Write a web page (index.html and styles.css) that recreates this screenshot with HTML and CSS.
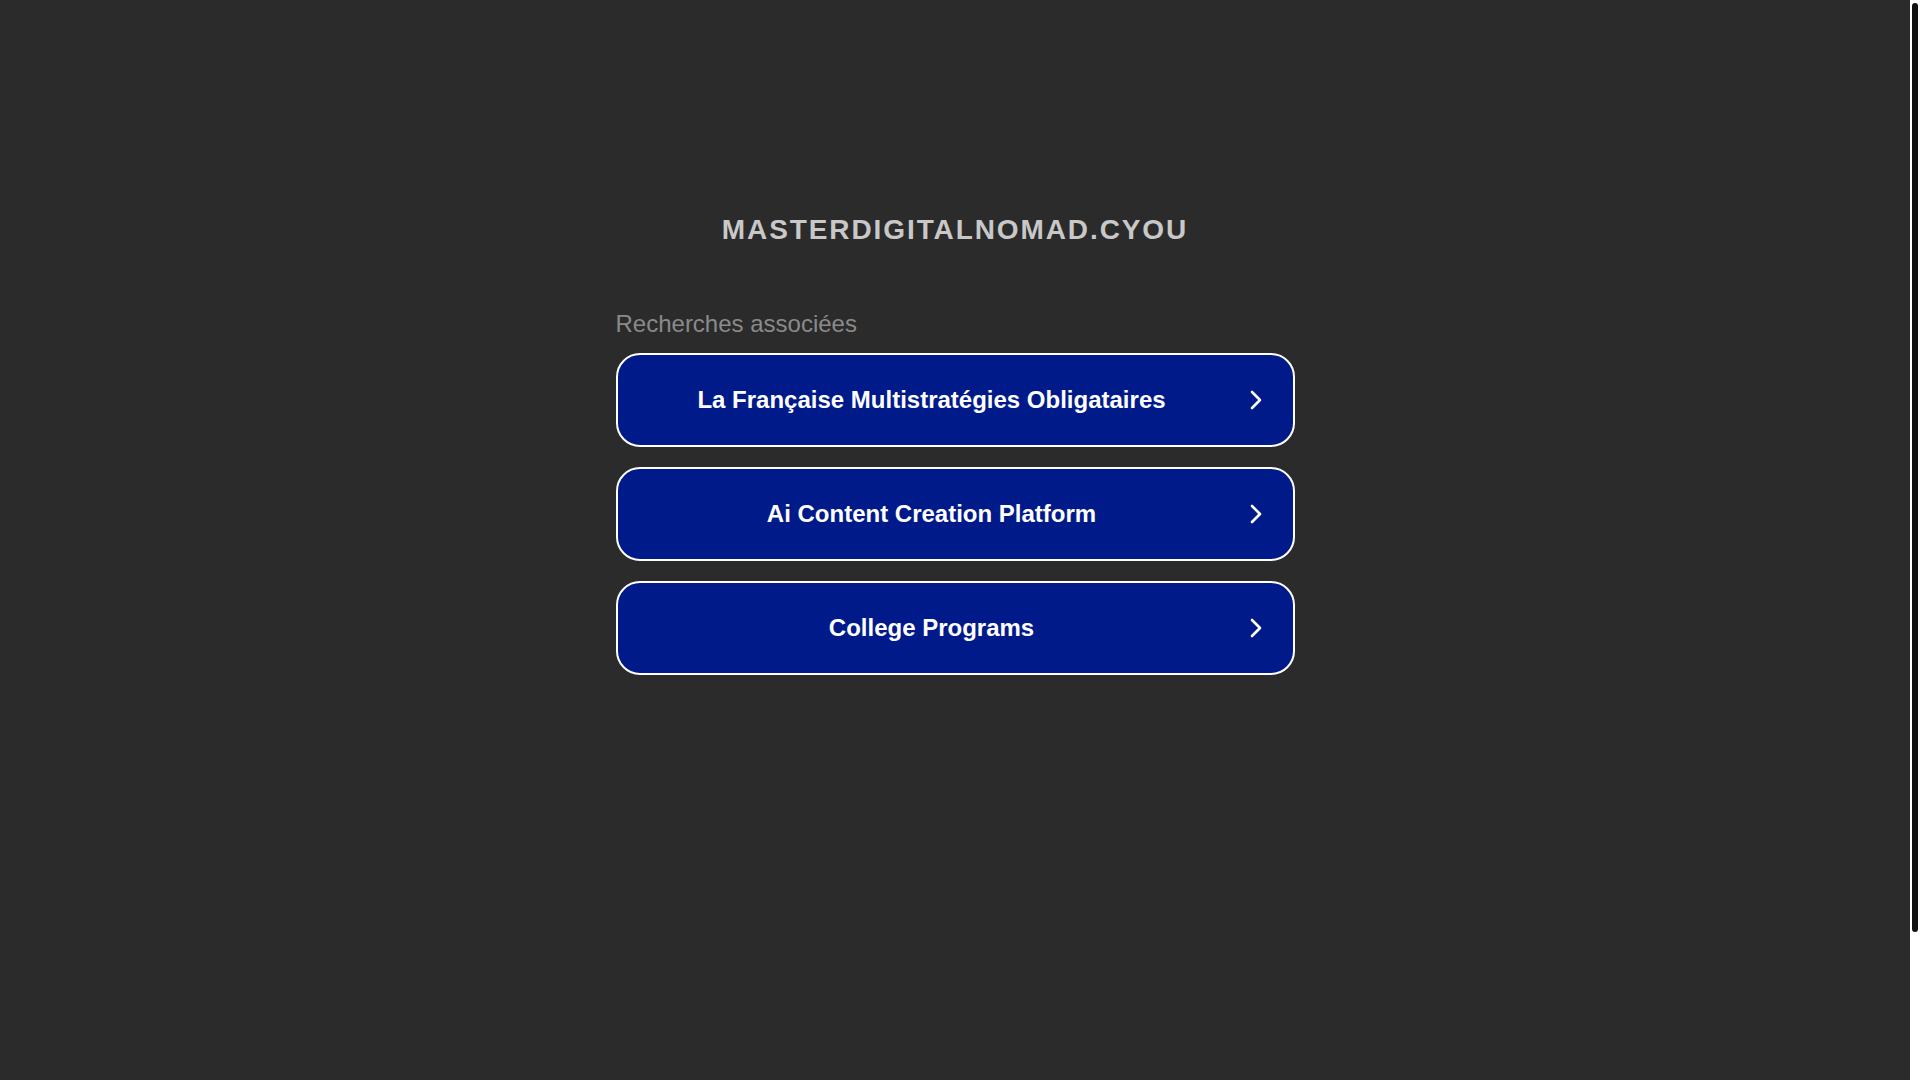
FILE: index.html
```html
<!DOCTYPE html>
<html lang="fr">
<head>
<meta charset="utf-8">
<title>masterdigitalnomad.cyou</title>
<link rel="stylesheet" href="styles.css">
</head>
<body>
<div class="page">
  <header class="header">
    <h1 class="domain">masterdigitalnomad.cyou</h1>
  </header>
  <section class="related">
    <p class="related-title">Recherches associées</p>
    <ul class="links">
      <li><a class="link" href="#"><span class="link-text">La Française Multistratégies Obligataires</span><svg class="chev" viewBox="0 0 12 20" width="12" height="20"><path d="M2 2 L10 10 L2 18" fill="none" stroke="#fff" stroke-width="2.6" stroke-linecap="round" stroke-linejoin="round"/></svg></a></li>
      <li><a class="link" href="#"><span class="link-text">Ai Content Creation Platform</span><svg class="chev" viewBox="0 0 12 20" width="12" height="20"><path d="M2 2 L10 10 L2 18" fill="none" stroke="#fff" stroke-width="2.6" stroke-linecap="round" stroke-linejoin="round"/></svg></a></li>
      <li><a class="link" href="#"><span class="link-text">College Programs</span><svg class="chev" viewBox="0 0 12 20" width="12" height="20"><path d="M2 2 L10 10 L2 18" fill="none" stroke="#fff" stroke-width="2.6" stroke-linecap="round" stroke-linejoin="round"/></svg></a></li>
    </ul>
  </section>
</div>
<div class="scrollbar" aria-hidden="true"><div class="scrollbar-thumb"></div></div>
</body>
</html>
```

FILE: styles.css
```css
html, body {
  margin: 0;
  padding: 0;
  background: #2b2b2b;
}
body {
  font-family: "Liberation Sans", Arial, sans-serif;
}
.page {
  min-height: 1254px;
  display: flex;
  flex-direction: column;
  align-items: center;
  padding-top: 215px;
  padding-right: 10px;
  box-sizing: border-box;
}
.domain {
  margin: 0;
  font-size: 28px;
  line-height: 30px;
  font-weight: bold;
  letter-spacing: 1.9px;
  text-transform: uppercase;
  color: #c8c8c8;
}
.related {
  width: 679px;
  margin-top: 65px;
}
.related-title {
  margin: 0 0 15px;
  font-size: 24px;
  line-height: 28px;
  color: #8a8a8a;
}
.links {
  list-style: none;
  margin: 0;
  padding: 0;
  display: flex;
  flex-direction: column;
  gap: 20px;
}
.link {
  display: flex;
  align-items: center;
  height: 94px;
  box-sizing: border-box;
  border: 2px solid #ffffff;
  border-radius: 24px;
  background: #011a8a;
  padding: 0 31px 0 20px;
  gap: 24px;
  text-decoration: none;
  color: #ffffff;
}
.link-text {
  flex: 1;
  text-align: center;
  font-size: 24px;
  font-weight: bold;
  line-height: 28px;
}
.chev {
  flex: none;
  display: block;
}
.scrollbar {
  position: fixed;
  top: 0;
  right: 0;
  bottom: 0;
  width: 10px;
  background: #ffffff;
  padding: 3px 2px 0;
  box-sizing: border-box;
}
.scrollbar-thumb {
  height: 929px;
  background: #111111;
  border-radius: 3px;
}
```
